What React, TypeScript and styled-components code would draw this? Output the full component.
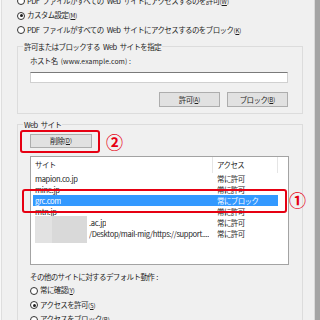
import React from "react";
import styled, { createGlobalStyle } from "styled-components";

const Global = createGlobalStyle`
  html, body { margin: 0; padding: 0; background: #f0f0f0; }
  body { width: 320px; height: 320px; overflow: hidden; }
  #root { width: 320px; height: 320px; }
`;

const Window = styled.div`
  width: 320px;
  height: 320px;
  display: flex;
  overflow: hidden;
  background: #f0f0f0;
  color: #1e1e1e;
  font-family: "Noto Sans CJK JP", "Noto Sans", sans-serif;
  font-size: 7.5px;
  letter-spacing: -0.6px;
  word-spacing: 2px;
  line-height: 10px;
`;

const LeftEdge = styled.div`
  flex: none;
  width: 1px;
  background: #f8f8f8;
  border-right: 1px solid #dedede;
`;

const ScrollStrip = styled.div`
  flex: none;
  width: 5px;
  background: #a4a4a4;
  border-left: 1px solid #dadada;
`;

const Content = styled.div`
  flex: 1;
  min-width: 0;
  display: flex;
  flex-direction: column;
  padding-left: 15px;
  margin-top: -6px;
`;

const RadioRow = styled.div<{ $indent?: number }>`
  display: flex;
  align-items: center;
  gap: 2px;
  height: 14.5px;
  flex: none;
  white-space: nowrap;
  margin-left: ${(p) => p.$indent ?? 0}px;
`;

const Radio = styled.span<{ $on?: boolean }>`
  flex: none;
  position: relative;
  width: 8px;
  height: 8px;
  box-sizing: border-box;
  border: 1px solid #333;
  border-radius: 50%;
  background: #fff;
  &::after {
    content: "";
    display: ${(p) => (p.$on ? "block" : "none")};
    position: absolute;
    left: 1.5px;
    top: 1.5px;
    width: 3px;
    height: 3px;
    border-radius: 50%;
    background: #1e1e1e;
  }
`;

const Acc = styled.span`
  font-size: 6px;
  letter-spacing: 0;
  u { text-decoration-thickness: 0.5px; }
`;

const Small = styled.span`
  font-size: 6.8px;
  letter-spacing: 0.1px;
  word-spacing: 0;
`;

const GroupBox = styled.fieldset<{ $top: number }>`
  margin: ${(p) => p.$top}px 0 0 0;
  padding: 0;
  width: 286px;
  box-sizing: border-box;
  min-width: 0;
  border: 1px solid #dcdcdc;
`;

const Legend = styled.legend`
  margin-left: 5px;
  padding: 0 1px;
  line-height: 9px;
`;

const HostBody = styled.div`
  display: flex;
  flex-direction: column;
  padding: 5px 14px 6px 12px;
`;

const FieldLabel = styled.div`
  height: 10px;
  line-height: 10px;
  white-space: nowrap;
`;

const TextBox = styled.div`
  margin-top: 6px;
  height: 11px;
  box-sizing: border-box;
  background: #fff;
  border: 1px solid #d0d0d0;
  border-top-color: #7a7a7a;
`;

const ButtonRow = styled.div`
  display: flex;
  justify-content: flex-end;
  gap: 7px;
  margin-top: 9px;
`;

const Button = styled.div<{ $w: number; $h: number }>`
  width: ${(p) => p.$w}px;
  height: ${(p) => p.$h}px;
  box-sizing: border-box;
  display: flex;
  align-items: center;
  justify-content: center;
  background: #e1e1e1;
  border: 1px solid #adadad;
  white-space: nowrap;
`;

const SitesBody = styled.div`
  display: flex;
  flex-direction: column;
  padding: 1.5px 0 0 2px;
  height: 200px;
`;

const DeleteRow = styled.div`
  display: flex;
  align-items: center;
  gap: 6px;
`;

const RedFrame = styled.div`
  width: 80px;
  box-sizing: border-box;
  border: 2px solid #e60012;
  border-radius: 3px;
  padding: 2px 6px 3px 8px;
`;

const Marker = styled.span`
  font-family: "Noto Sans CJK JP", sans-serif;
  font-size: 17px;
  line-height: 17px;
  letter-spacing: 0;
  color: #e60012;
  font-weight: 700;
`;

const ListWrap = styled.div`
  position: relative;
  flex: none;
  margin: 3px 0 0 10px;
  width: 259px;
`;

const List = styled.div`
  height: 109px;
  box-sizing: border-box;
  background: #fff;
  border: 1px solid #a3a3a3;
  overflow: hidden;
  display: flex;
  flex-direction: column;
`;

const Line = styled.div`
  display: flex;
  margin-left: 2px;
  width: 245px;
  flex: none;
`;

const HeaderRow = styled(Line)`
  height: 16px;
`;

const HeaderCell = styled.div<{ $w: number; $pad: number }>`
  flex: none;
  box-sizing: border-box;
  width: ${(p) => p.$w}px;
  display: flex;
  align-items: center;
  padding-left: ${(p) => p.$pad}px;
  border-right: 1px solid #e5e5e5;
  white-space: nowrap;
`;

const Row = styled(Line)<{ $sel?: boolean }>`
  height: 11px;
  line-height: 11px;
  background: ${(p) => (p.$sel ? "#3399ff" : "transparent")};
  color: ${(p) => (p.$sel ? "#ffffff" : "inherit")};
`;

const SiteCell = styled.div`
  flex: none;
  box-sizing: border-box;
  width: 180px;
  display: flex;
  align-items: flex-start;
  padding-left: 2px;
  white-space: nowrap;
  font-size: 7.6px;
  letter-spacing: -0.35px;
  overflow-x: clip;
  overflow-y: visible;
`;

const SiteText = styled.span`
  min-width: 0;
  overflow: hidden;
`;

const AccessCell = styled.div`
  flex: none;
  box-sizing: border-box;
  width: 65px;
  padding-left: 4px;
  white-space: nowrap;
`;

const Redact = styled.span<{ $h: number; $shift: number }>`
  flex: none;
  display: inline-block;
  width: 52px;
  height: ${(p) => p.$h}px;
  margin: ${(p) => p.$shift}px 2px 0 0;
  background: linear-gradient(90deg, #e2e2e2 0 17px, #d9d9d9 17px 100%);
`;

const RowBox = styled.div`
  position: absolute;
  left: -8px;
  top: 33px;
  width: 265px;
  height: 24px;
  box-sizing: border-box;
  border: 2px solid #e60012;
  border-radius: 3px;
  pointer-events: none;
`;

const RowMarker = styled(Marker)`
  position: absolute;
  left: 259px;
  top: 35px;
`;

const DefaultLabel = styled.div`
  margin: 7px 0 1.5px 10px;
  line-height: 10px;
  white-space: nowrap;
  word-spacing: 1px;
`;

type Site = { name: React.ReactNode; access: string; sel?: boolean };

const sites: Site[] = [
  { name: <SiteText>mapion.co.jp</SiteText>, access: "常に許可" },
  { name: <SiteText>mine.jp</SiteText>, access: "常に許可" },
  { name: <SiteText>grc.com</SiteText>, access: "常にブロック", sel: true },
  { name: <SiteText>mtn.jp</SiteText>, access: "常に許可" },
  {
    name: (
      <>
        <Redact $h={12} $shift={-1} />
        <SiteText>.ac.jp</SiteText>
      </>
    ),
    access: "常に許可",
  },
  {
    name: (
      <>
        <Redact $h={15} $shift={0} />
        <SiteText>/Desktop/mail-mig/https://support....</SiteText>
      </>
    ),
    access: "常に許可",
  },
];

const A = ({ k }: { k: string }) => (
  <Acc>
    (<u>{k}</u>)
  </Acc>
);

export default function App() {
  return (
    <>
      <Global />
      <Window>
        <LeftEdge />
        <Content>
          <RadioRow>
            <Radio />
            <span>
              PDF ファイルがすべての Web サイトにアクセスするのを許可<A k="W" />
            </span>
          </RadioRow>
          <RadioRow>
            <Radio $on />
            <span>
              カスタム設定<A k="M" />
            </span>
          </RadioRow>
          <RadioRow>
            <Radio />
            <span>
              PDF ファイルがすべての Web サイトにアクセスするのをブロック<A k="K" />
            </span>
          </RadioRow>

          <GroupBox $top={4.5}>
            <Legend>許可またはブロックする Web サイトを指定</Legend>
            <HostBody>
              <FieldLabel>
                ホスト名 <Small>(www.example.com) :</Small>
              </FieldLabel>
              <TextBox />
              <ButtonRow>
                <Button $w={61} $h={15}>
                  許可<A k="A" />
                </Button>
                <Button $w={61} $h={15}>
                  ブロック<A k="B" />
                </Button>
              </ButtonRow>
            </HostBody>
          </GroupBox>

          <GroupBox $top={5.5}>
            <Legend>Web サイト</Legend>
            <SitesBody>
              <DeleteRow>
                <RedFrame>
                  <Button $w={62} $h={14}>
                    削除<A k="D" />
                  </Button>
                </RedFrame>
                <Marker>②</Marker>
              </DeleteRow>
              <ListWrap>
                <List>
                  <HeaderRow>
                    <HeaderCell $w={180} $pad={2}>サイト</HeaderCell>
                    <HeaderCell $w={65} $pad={4}>アクセス</HeaderCell>
                  </HeaderRow>
                  {sites.map((s, i) => (
                    <Row key={i} $sel={s.sel}>
                      <SiteCell>{s.name}</SiteCell>
                      <AccessCell>{s.access}</AccessCell>
                    </Row>
                  ))}
                </List>
                <RowBox />
                <RowMarker>①</RowMarker>
              </ListWrap>
              <DefaultLabel>その他のサイトに対するデフォルト動作 :</DefaultLabel>
              <RadioRow $indent={10}>
                <Radio />
                <span>
                  常に確認<A k="Y" />
                </span>
              </RadioRow>
              <RadioRow $indent={10}>
                <Radio $on />
                <span>
                  アクセスを許可<A k="S" />
                </span>
              </RadioRow>
              <RadioRow $indent={10}>
                <Radio />
                <span>
                  アクセスをブロック<A k="B" />
                </span>
              </RadioRow>
            </SitesBody>
          </GroupBox>
        </Content>
        <ScrollStrip />
      </Window>
    </>
  );
}
